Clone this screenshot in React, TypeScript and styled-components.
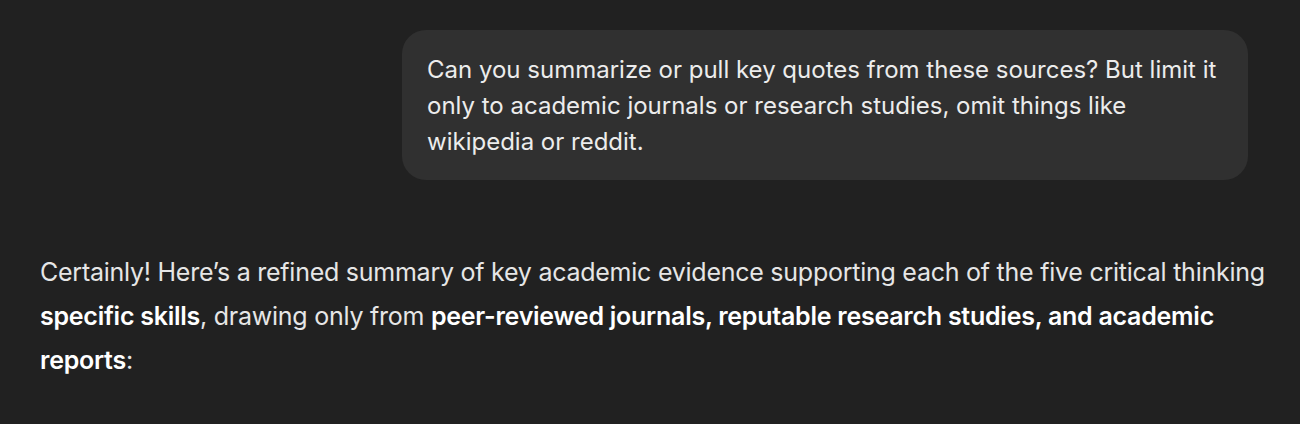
import React from "react";
import styled, { createGlobalStyle } from "styled-components";

const Global = createGlobalStyle`
  html, body { margin: 0; padding: 0; background: #212121; }
  body { font-family: Inter, "Noto Sans", "Liberation Sans", sans-serif; -webkit-font-smoothing: antialiased; }
`;

const Page = styled.main`
  width: 1300px;
  height: 424px;
  background: #212121;
  box-sizing: border-box;
  padding: 30px 52px 0 40px;
  display: flex;
  flex-direction: column;
  overflow: hidden;
`;

const UserRow = styled.div`
  display: flex;
  justify-content: flex-end;
`;

const Bubble = styled.div`
  width: 846px;
  box-sizing: border-box;
  background: #303030;
  border-radius: 24px;
  padding: 22px 22px 20px 25px;
  color: #ececec;
  font-size: 24px;
  line-height: 36px;
  letter-spacing: 0;
`;

const Answer = styled.div`
  width: 1240px;
  margin-top: 70px;
  color: #e6e6e6;
  font-size: 25px;
  line-height: 44px;
  letter-spacing: -0.25px;
`;

const Strong = styled.strong`
  font-weight: 600;
  color: #ffffff;
`;

export default function App() {
  return (
    <>
      <Global />
      <Page>
        <UserRow>
          <Bubble>
            Can you summarize or pull key quotes from these sources? But limit it only to academic journals or research studies, omit things like wikipedia or reddit.
          </Bubble>
        </UserRow>
        <Answer>
          Certainly! Here’s a refined summary of key academic evidence supporting each of the five critical thinking{" "}
          <Strong>specific skills</Strong>, drawing only from{" "}
          <Strong>peer-reviewed journals, reputable research studies, and academic reports</Strong>:
        </Answer>
      </Page>
    </>
  );
}
